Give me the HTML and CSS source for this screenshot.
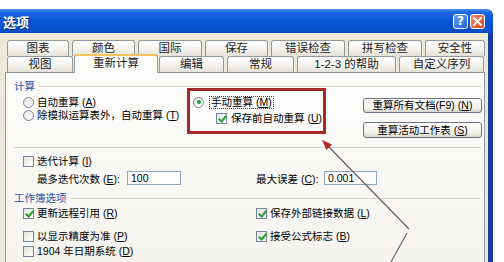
FILE: index.html
```html
<!DOCTYPE html>
<html>
<head>
    <meta charset="utf-8" />
    <title>选项</title>
    <link rel="stylesheet" href="styles.css">
</head>
<body>
<div class="window">
    <!-- title bar -->
    <div class="titlebar">
        <span class="title">选项</span>
        <div class="caption-buttons">
            <span class="cap-btn help">?</span>
            <span class="cap-btn close">
                <svg width="9" height="9" viewBox="0 0 9 9"><path d="M1 1 L8 8 M8 1 L1 8" stroke="#fff" stroke-width="1.8" stroke-linecap="round"/></svg>
            </span>
        </div>
    </div>

    <div class="client">
        <!-- tabs -->
        <div class="tab-row">
            <div class="tab" style="width: 62px">图表</div>
            <div class="tab" style="width: 63px">颜色</div>
            <div class="tab" style="width: 64px">国际</div>
            <div class="tab" style="width: 63px">保存</div>
            <div class="tab" style="width: 74px">错误检查</div>
            <div class="tab" style="width: 74px">拼写检查</div>
            <div class="tab" style="width: 60px">安全性</div>
        </div>
        <div class="tab-row">
            <div class="tab" style="width: 66px">视图</div>
            <div class="tab active" style="width: 84px">重新计算</div>
            <div class="tab" style="width: 65px">编辑</div>
            <div class="tab" style="width: 67px">常规</div>
            <div class="tab" style="width: 99px">1-2-3 的帮助</div>
            <div class="tab" style="width: 85px">自定义序列</div>
        </div>

        <div class="panel">
            <div class="group-head">计算</div>
            <div class="calc-row">
                <div class="radio-col">
                    <div class="opt"><span class="radio"></span><span>自动重算 (<u>A</u>)</span></div>
                    <div class="opt"><span class="radio"></span><span>除模拟运算表外，自动重算 (<u>T</u>)</span></div>
                </div>
                <div class="mark-box">
                    <div class="opt"><span class="radio on"></span><span class="focus">手动重算 (<u>M</u>)</span></div>
                    <div class="opt sub"><span class="check on"></span><span>保存前自动重算 (<u>U</u>)</span></div>
                </div>
                <div class="btn-col">
                    <div class="btn">重算所有文档(F9) (<u>N</u>)</div>
                    <div class="btn tall">重算活动工作表 (<u>S</u>)</div>
                </div>
            </div>
            <div class="sep"></div>

            <div class="iter">
                <div class="opt"><span class="check"></span><span>迭代计算 (<u>I</u>)</span></div>
                <div class="iter-fields">
                    <div class="field first">
                        <span>最多迭代次数 (<u>E</u>):</span>
                        <span class="input">100</span>
                    </div>
                    <div class="field second">
                        <span>最大误差 (<u>C</u>):</span>
                        <span class="input">0.001</span>
                    </div>
                </div>
            </div>

            <div class="group-head">工作簿选项</div>
            <div class="book-grid">
                <div class="opt"><span class="check on"></span><span>更新远程引用 (<u>R</u>)</span></div>
                <div class="opt"><span class="check on"></span><span>保存外部链接数据 (<u>L</u>)</span></div>
                <div class="opt"><span class="check"></span><span>以显示精度为准 (<u>P</u>)</span></div>
                <div class="opt"><span class="check on"></span><span>接受公式标志 (<u>B</u>)</span></div>
                <div class="opt"><span class="check"></span><span>1904 年日期系统 (<u>D</u>)</span></div>
            </div>
        </div>
    </div>
</div>

<!-- annotation arrow drawn over the dialog -->
<svg class="arrow" width="504" height="262" viewBox="0 0 504 262">
    <line x1="409" y1="229" x2="327" y2="145" stroke="#6e5555" stroke-width="1.1"/>
    <line x1="407" y1="233" x2="391" y2="262" stroke="#6e5555" stroke-width="1.1"/>
    <polygon points="322,140 332,144.5 326.5,150" fill="#b02a2a"/>
</svg>
</body>
</html>
```

FILE: styles.css
```css
* {
    box-sizing: border-box;
}
body {
    margin: 0;
    padding-top: 9px;
    width: 504px;
    height: 262px;
    overflow: hidden;
    position: relative;
    background: #fff;
    font-family: "Liberation Sans", "Noto Sans CJK SC", sans-serif;
    font-size: 10.5px;
    color: #000;
}

/* window frame */
.window {
    width: 493px;
}
.titlebar {
    height: 24px;
    display: flex;
    align-items: center;
    padding: 0 8px 0 3px;
    border-top-right-radius: 6px;
    background: linear-gradient(#4a92f6 0, #1c66e2 14%, #0a56d8 45%, #0851d0 80%, #0a4cc2 100%);
}
.title {
    flex: 1;
    color: #fff;
    font-weight: bold;
    font-size: 13px;
    text-shadow: 1px 1px 0 #0a2a80;
}
.caption-buttons {
    display: flex;
    gap: 2px;
}
.cap-btn {
    width: 15px;
    height: 15px;
    border: 1px solid #fff;
    border-radius: 3px;
    display: flex;
    align-items: center;
    justify-content: center;
    color: #fff;
    font: bold 12px "DejaVu Sans", sans-serif;
}
.help {
    background: linear-gradient(135deg, #6aa0f6, #2460de);
}
.close {
    background: linear-gradient(135deg, #f29070, #d3421e);
}
.client {
    height: 229px;
    padding: 7px 3px 0 5px;
    background: #ece9d8;
    border-right: 5px solid #183c9e;
}

/* tabs */
.tab-row {
    display: flex;
    align-items: flex-end;
    gap: 3px;
    height: 16px;
    margin-left: 2px;
}
.tab {
    height: 16px;
    border: 1px solid #919b9c;
    border-bottom: none;
    border-radius: 3px 3px 0 0;
    background: linear-gradient(#fff, #f2f1ec 60%, #e4e2da);
    font-size: 11.5px;
    line-height: 15px;
    text-align: center;
    white-space: nowrap;
    color: #222;
}
.tab.active {
    position: relative;
    z-index: 1;
    height: 19px;
    margin: -2px -2px -1px -2px;
    border-top: 2px solid #f2c45a;
    background: #fdfdfc;
    line-height: 15px;
}

/* tab page */
.panel {
    height: 200px;
    border: 1px solid #919b9c;
    background: linear-gradient(#fdfdfc, #f5f4ef);
}
.group-head {
    display: flex;
    align-items: center;
    gap: 4px;
    height: 12px;
    margin: 7px 3px 0 8px;
    line-height: 12px;
    color: #2b4ea6;
}
.group-head::after {
    content: "";
    flex: 1;
    border-top: 1px solid #d8d5c8;
}
.opt {
    display: flex;
    align-items: center;
    gap: 3px;
    height: 12px;
    line-height: 12px;
    white-space: nowrap;
}
.radio, .check {
    flex: none;
    position: relative;
    width: 11px;
    height: 11px;
    border: 1px solid #76859e;
    background: linear-gradient(135deg, #e4e3dc, #fff);
}
.radio {
    border-radius: 50%;
}
.radio.on::after {
    content: "";
    position: absolute;
    left: 2.5px;
    top: 2.5px;
    width: 4px;
    height: 4px;
    border-radius: 50%;
    background: #2c9a36;
}
.check.on::after {
    content: "";
    position: absolute;
    left: 3px;
    top: 0;
    width: 3px;
    height: 6px;
    border: solid #22a02a;
    border-width: 0 2px 2px 0;
    transform: rotate(40deg);
}

/* calculation group */
.calc-row {
    display: flex;
    align-items: flex-start;
    margin-top: -4px;
}
.radio-col {
    display: flex;
    flex-direction: column;
    gap: 1px;
    width: 164px;
    margin-left: 17px;
    padding-top: 8px;
}
.mark-box {
    width: 139px;
    height: 46px;
    padding: 4px 0 0 3px;
    border: 3px solid #a3282b;
    display: flex;
    flex-direction: column;
    gap: 2px;
}
.mark-box .opt {
    height: 14px;
    gap: 5px;
}
.mark-box .sub {
    margin-left: 23px;
    gap: 4px;
}
.focus {
    padding: 0 1px;
    border: 1px dotted #444;
    line-height: 11px;
}
.btn-col {
    display: flex;
    flex-direction: column;
    gap: 9px;
    width: 119px;
    margin: 10px 0 0 37px;
}
.btn {
    height: 15px;
    border: 1px solid #6d7382;
    border-radius: 3px;
    background: linear-gradient(#fff, #f1f0ea 70%, #d9d5cb);
    text-align: center;
    line-height: 13px;
    white-space: nowrap;
}
.btn.tall {
    height: 16px;
    line-height: 14px;
}
.sep {
    margin: 9px 3px 0 8px;
    border-top: 1px solid #d8d5c8;
}

/* iteration */
.iter {
    margin-top: 6px;
}
.iter > .opt {
    height: 14px;
    margin-left: 17px;
}
.iter-fields {
    display: flex;
    margin-top: 3px;
}
.field {
    display: flex;
    align-items: center;
    justify-content: space-between;
    height: 14px;
    white-space: nowrap;
}
.field.first {
    width: 144px;
    margin-left: 31px;
}
.field.second {
    width: 121px;
    margin-left: 75px;
}
.input {
    height: 14px;
    border: 1px solid #8fa6c0;
    background: #fff;
    padding-left: 3px;
    line-height: 12px;
}
.field.first .input {
    width: 54px;
}
.field.second .input {
    width: 53px;
}

/* workbook options */
.book-grid {
    display: grid;
    grid-template-columns: 233px auto;
    grid-template-rows: 23px 15px 14px;
    align-items: start;
    margin: 2px 0 0 17px;
}
.book-grid .opt {
    height: 14px;
}

.arrow {
    position: absolute;
    left: 0;
    top: 0;
    pointer-events: none;
}
```
